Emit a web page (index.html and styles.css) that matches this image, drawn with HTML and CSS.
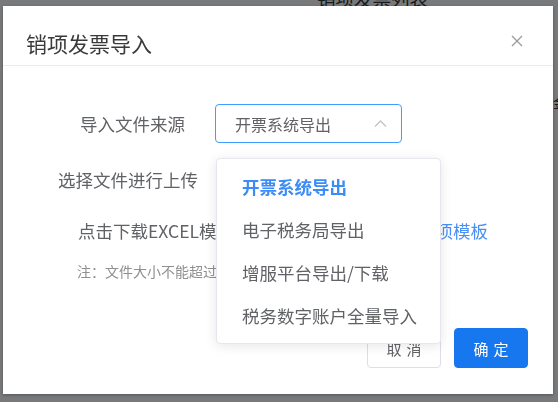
FILE: index.html
```html
<!DOCTYPE html>
<html lang="zh-CN">
<head>
    <meta charset="UTF-8">
    <meta name="viewport" content="width=device-width, initial-scale=1.0">
    <title>销项发票导入</title>
    <link rel="stylesheet" href="styles.css">
</head>
<body>
    <div class="page">
        <h2 class="page-title">销项发票列表</h2>
        <div class="page-bar"><span class="page-cell">金额</span></div>
    </div>
    <div class="mask">
        <div class="dialog">
            <div class="dialog-header">
                <span class="dialog-title">销项发票导入</span>
                <button class="dialog-close" type="button">
                    <svg width="12" height="12" viewBox="0 0 12 12"><path d="M1 1L11 11M11 1L1 11" stroke="#9a9a9a" stroke-width="1.3" fill="none"/></svg>
                </button>
            </div>
            <div class="dialog-body">
                <div class="form-row">
                    <label class="form-label label-source">导入文件来源</label>
                    <div class="select">
                        <div class="select-input">
                            <span>开票系统导出</span>
                            <svg width="13" height="7" viewBox="0 0 13 7"><path d="M1 6.5L6.5 1L12 6.5" stroke="#c0c4cc" stroke-width="1.4" fill="none"/></svg>
                        </div>
                        <ul class="select-menu">
                            <li class="select-item active">开票系统导出</li>
                            <li class="select-item">电子税务局导出</li>
                            <li class="select-item">增服平台导出/下载</li>
                            <li class="select-item">税务数字账户全量导入</li>
                        </ul>
                    </div>
                </div>
                <div class="form-row row-upload">
                    <label class="form-label">选择文件进行上传</label>
                    <button class="upload-btn" type="button">选择文件</button>
                </div>
                <div class="tpl-row">
                    <span>点击下载EXCEL模板：</span>
                    <a class="tpl-link" href="#">发票导入销项模板</a>
                </div>
                <p class="tip">注：文件大小不能超过10M，仅支持xls、xlsx格式</p>
            </div>
            <div class="dialog-footer">
                <button class="btn" type="button">取消</button>
                <button class="btn btn-primary" type="button">确定</button>
            </div>
        </div>
    </div>
</body>
</html>
```

FILE: styles.css
```css
body{
    margin: 0;
    overflow: hidden;
    font-family: "Noto Sans CJK SC", "Liberation Sans", sans-serif;
    background: #f0f2f5;
}
.page{
    white-space: nowrap;
}
.page-title{
    margin: -12px 0 0 317px;
    font-size: 18.5px;
    line-height: 20px;
    font-weight: normal;
    color: #333;
}
.page-bar{
    margin-top: 84px;
    font-size: 14px;
    color: #303133;
}
.page-cell{
    margin-left: 553px;
}
.mask{
    position: fixed;
    top: 0;
    left: 0;
    right: 0;
    bottom: 0;
    background: rgba(0, 0, 0, 0.5);
}
.dialog{
    width: 550px;
    height: 388px;
    margin: 6px 0 0 3px;
    background: #fff;
    display: flex;
    flex-direction: column;
    box-shadow: 0 1px 3px rgba(0, 0, 0, 0.3);
}
.dialog-header{
    height: 60px;
    box-sizing: border-box;
    padding: 26px 30px 0 23px;
    display: flex;
    justify-content: space-between;
    align-items: flex-start;
    border-bottom: 1px solid #ebebeb;
}
.dialog-title{
    font-size: 21px;
    line-height: 22px;
    color: #3a3a3a;
}
.dialog-close{
    margin-top: 3px;
    padding: 0;
    border: none;
    background: none;
    display: flex;
}
.dialog-body{
    padding: 38px 0 0 55px;
}
.form-row{
    display: flex;
    align-items: center;
}
.form-label{
    width: 140px;
    box-sizing: border-box;
    text-align: right;
    font-size: 17.5px;
    color: #606266;
}
.label-source{
    padding-right: 13px;
}
.select{
    position: relative;
    margin-left: 17px;
}
.select-input{
    width: 187px;
    height: 39px;
    box-sizing: border-box;
    border: 1px solid #409eff;
    border-radius: 4px;
    padding: 0 14px 0 19px;
    display: flex;
    align-items: center;
    justify-content: space-between;
    font-size: 16px;
    color: #606266;
}
.select-menu{
    position: absolute;
    z-index: 10;
    top: 54px;
    left: 1px;
    width: 225px;
    box-sizing: border-box;
    margin: 0;
    padding: 6px 0;
    list-style: none;
    background: #fff;
    border: 1px solid #e4e7ed;
    border-radius: 4px;
    box-shadow: 0 2px 12px rgba(0, 0, 0, 0.1);
}
.select-item{
    height: 43px;
    line-height: 43px;
    padding-left: 25px;
    font-size: 17.5px;
    color: #606266;
    white-space: nowrap;
}
.select-item.active{
    color: #3d8bf7;
    font-weight: bold;
}
.row-upload{
    margin-top: 16px;
    height: 40px;
}
.upload-btn{
    margin-left: 24px;
    height: 36px;
    padding: 0 16px;
    border: 1px solid #dcdfe6;
    border-radius: 4px;
    background: #fff;
    color: #606266;
    font-family: inherit;
    font-size: 15px;
}
.tpl-row{
    margin: 20px 0 0 20px;
    width: 410px;
    display: flex;
    justify-content: space-between;
    font-size: 17.5px;
    line-height: 24px;
    color: #606266;
    white-space: nowrap;
}
.tpl-link{
    color: #4a8ff5;
    text-decoration: none;
}
.tip{
    margin: 18px 0 0 19px;
    font-size: 14px;
    line-height: 20px;
    color: #8f8f8f;
}
.dialog-footer{
    margin-top: auto;
    padding: 0 25px 26px;
    display: flex;
    justify-content: flex-end;
    gap: 13px;
}
.btn{
    width: 74px;
    height: 40px;
    padding: 0 0 0 5px;
    border: 1px solid #dcdfe6;
    border-radius: 4px;
    background: #fff;
    color: #606266;
    font-family: inherit;
    font-size: 15px;
    letter-spacing: 5px;
}
.btn-primary{
    background: #1677ee;
    border-color: #1677ee;
    color: #fff;
}
```
